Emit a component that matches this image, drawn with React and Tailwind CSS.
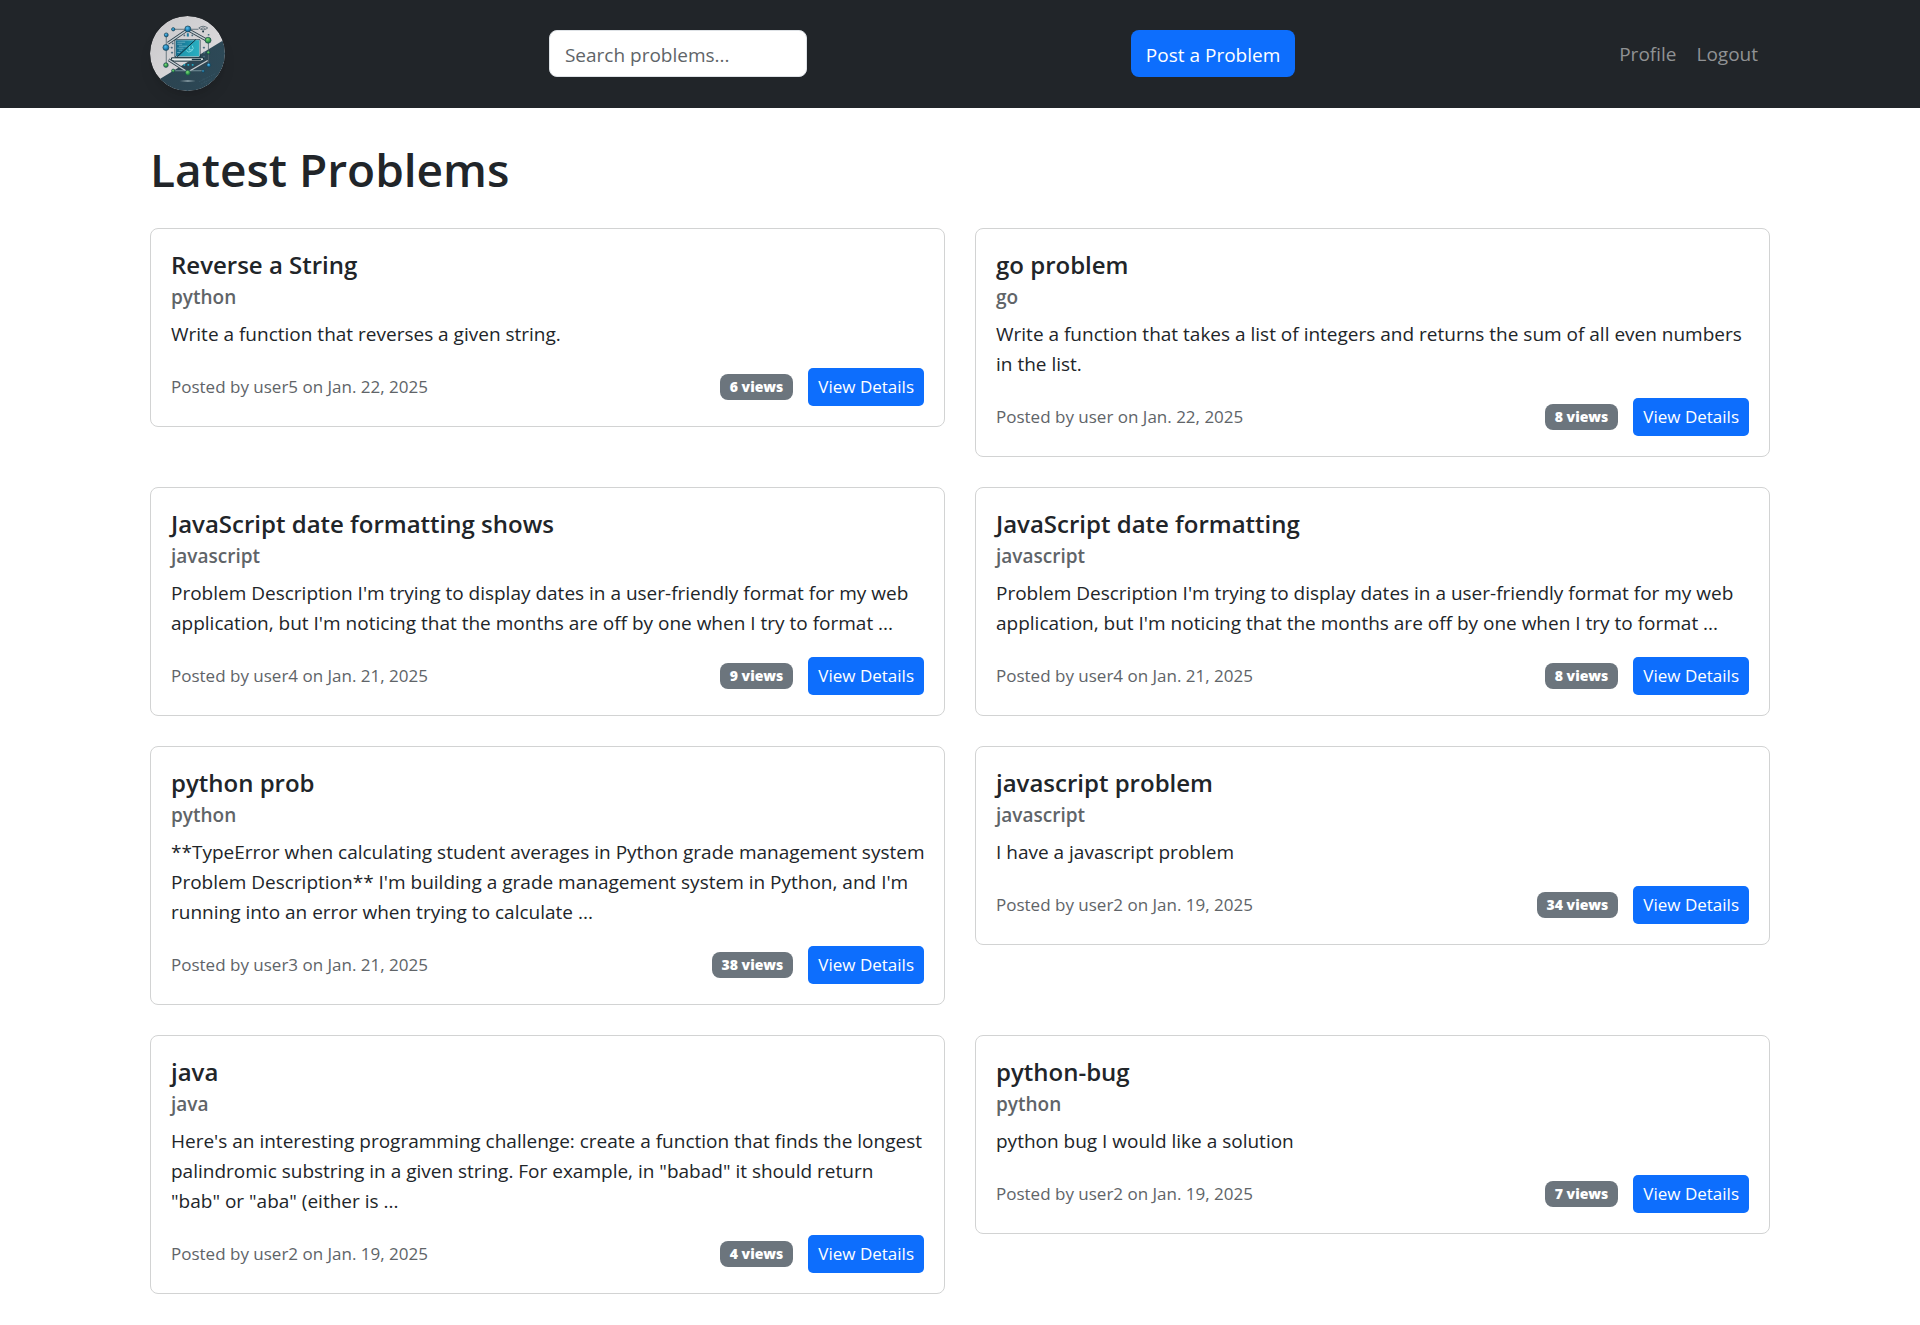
const problems = [
  { title: 'Reverse a String', language: 'python', text: 'Write a function that reverses a given string.', user: 'user5', date: 'Jan. 22, 2025', views: 6 },
  { title: 'go problem', language: 'go', text: 'Write a function that takes a list of integers and returns the sum of all even numbers in the list.', user: 'user', date: 'Jan. 22, 2025', views: 8 },
  { title: 'JavaScript date formatting shows', language: 'javascript', text: "Problem Description I'm trying to display dates in a user-friendly format for my web application, but I'm noticing that the months are off by one when I try to format ...", user: 'user4', date: 'Jan. 21, 2025', views: 9 },
  { title: 'JavaScript date formatting', language: 'javascript', text: "Problem Description I'm trying to display dates in a user-friendly format for my web application, but I'm noticing that the months are off by one when I try to format ...", user: 'user4', date: 'Jan. 21, 2025', views: 8 },
  { title: 'python prob', language: 'python', text: "**TypeError when calculating student averages in Python grade management system Problem Description** I'm building a grade management system in Python, and I'm running into an error when trying to calculate ...", user: 'user3', date: 'Jan. 21, 2025', views: 38 },
  { title: 'javascript problem', language: 'javascript', text: 'I have a javascript problem', user: 'user2', date: 'Jan. 19, 2025', views: 34 },
  { title: 'java', language: 'java', text: 'Here\'s an interesting programming challenge: create a function that finds the longest palindromic substring in a given string. For example, in "babad" it should return "bab" or "aba" (either is ...', user: 'user2', date: 'Jan. 19, 2025', views: 4 },
  { title: 'python-bug', language: 'python', text: 'python bug I would like a solution', user: 'user2', date: 'Jan. 19, 2025', views: 7 },
];

const nodes = [
  [144, 87, 9, 'b'], [100, 88, 5, 'b'], [79, 105, 6, 'b'], [78, 143, 9, 'b'], [207, 196, 6, 'b'], [190, 214, 4, 'b'],
  [205, 121, 9, 'g'], [206, 158, 5, 'g'], [78, 196, 7, 'g'], [100, 213, 5, 'g'], [144, 219, 8, 'g'],
];

const dots = [
  [133, 106], [157, 106], [98, 130], [95, 143], [96, 158], [192, 143], [193, 158], [192, 170], [206, 104],
  [133, 195], [145, 195], [158, 195],
];

function Logo() {
  return (
    <svg viewBox="30 48 226 226" className="size-[75px] rounded-full shadow-lg" role="img" aria-label="Home">
      <defs>
        <clipPath id="disc"><circle cx="143" cy="161" r="113" /></clipPath>
        <linearGradient id="light" x1="0" y1="0" x2="1" y2="1">
          <stop offset="0" stopColor="#c9c8ca" /><stop offset="1" stopColor="#e2e0e3" />
        </linearGradient>
        <linearGradient id="dark" x1="0" y1="0" x2="1" y2="0">
          <stop offset="0" stopColor="#2b4350" /><stop offset="1" stopColor="#2d4957" />
        </linearGradient>
        <linearGradient id="screen" x1="0" y1="0" x2="1" y2="0">
          <stop offset="0" stopColor="#14698a" /><stop offset="1" stopColor="#25a9bd" />
        </linearGradient>
        <radialGradient id="b" cx=".4" cy=".35"><stop offset="0" stopColor="#58bff0" /><stop offset="1" stopColor="#1672a5" /></radialGradient>
        <radialGradient id="g" cx=".4" cy=".35"><stop offset="0" stopColor="#7bdd76" /><stop offset="1" stopColor="#288b46" /></radialGradient>
      </defs>
      <g clipPath="url(#disc)">
        <rect x="30" y="48" width="226" height="226" fill="url(#light)" />
        <path d="M30 256 L256 118 V274 H30Z" fill="url(#dark)" />
        <g fill="none" stroke="#33434e" strokeWidth="9">
          <path d="M84 130 L144 89 L205 123" />
          <path d="M86 180 L144 217 L204 182" />
        </g>
        <g fill="none" stroke="#c4ced2" strokeWidth="4">
          <path d="M84 130 L144 89 L205 123" />
          <path d="M86 180 L144 217 L204 182" />
        </g>
        <g fill="none" stroke="#55666f" strokeWidth="2.5">
          <path d="M144 88 H100 M79 105 V196" />
          <path d="M144 88 H176 M206 121 V196" />
          <path d="M100 213 H190" stroke="#82a0a8" />
          <path d="M177 84 Q190 74 204 84 Q190 96 177 84 M184 86 Q190 81 197 86" />
        </g>
        <circle cx="190" cy="95" r="3" fill="#203b48" />
        {dots.map(([x, y], i) => <rect key={i} x={x - 2} y={y - 2} width="5" height="5" rx="1" fill={i > 8 ? '#22a8c2' : '#4b6d7e'} />)}
        <rect x="141" y="100" width="6" height="10" fill="#247d9f" />
        <rect x="104" y="117" width="78" height="57" rx="5" fill="#102b38" />
        <rect x="107" y="120" width="72" height="50" rx="2" fill="url(#screen)" stroke="#d4dfe1" strokeWidth="2" />
        <path d="M166 121 L178 121 V169 H116Z" fill="#2bb4c5" opacity=".55" />
        <path d="M112 127 H136 M112 133 H127 M117 139 H142 M112 145 H131 M117 151 H127 M112 158 H121" stroke="#9bd1dc" strokeWidth="2" opacity=".85" />
        <path d="M157 137 A11 11 0 1 1 139 152 M148 138 V150 H157" fill="none" stroke="#8be0e6" strokeWidth="2.5" />
        <path d="M168 119 L112 171" stroke="#12303c" strokeWidth="3" />
        <path d="M95 174 H191 V179 Q188 184 182 184 H104 Q97 184 95 179Z" fill="#e9efee" stroke="#112a35" strokeWidth="3" />
        <path d="M156 179 H184" stroke="#163643" strokeWidth="4" />
        {nodes.map(([x, y, r, c], i) => <circle key={i} cx={x} cy={y} r={r} fill={c === 'b' ? 'url(#b)' : 'url(#g)'} stroke="#1c4250" strokeWidth="2" />)}
        <path d="M120 244 Q144 241 168 244 Q144 247 120 244Z" fill="#c9d9dd" />
        <path d="M178 246 L226 222 M184 253 L216 237 M190 236 L204 260" stroke="#3e6070" strokeWidth="1.5" strokeDasharray="5 3" />
      </g>
    </svg>
  );
}

function Card({ problem }) {
  return (
    <article className="rounded-[8px] border border-[#d2d3d3] bg-white px-5 pt-[21px] pb-5">
      <h2 className="text-2xl leading-[30px] font-semibold">{problem.title}</h2>
      <h3 className="mt-[5px] mb-2.5 text-[19px] leading-6 font-semibold text-[#606468]">{problem.language}</h3>
      <p className="-mr-0.5 mb-[19px] text-[19px] leading-[30px]">{problem.text}</p>
      <div className="flex items-center justify-between">
        <small className="text-[17px] leading-[26px] text-[#606468]">Posted by {problem.user} on {problem.date}</small>
        <div className="flex items-center gap-[15px]">
          <span className="rounded-[8px] bg-[#6c757d] px-2.5 text-sm leading-[26px] font-extrabold text-white">{problem.views} views</span>
          <a href="#" className="rounded-[5px] bg-[#0d6efd] px-2.5 text-[17px] leading-[38px] text-white">View Details</a>
        </div>
      </div>
    </article>
  );
}

export default function App() {
  return (
    <div className="min-h-screen bg-white pb-7 font-['Open_Sans',sans-serif] text-[#212529]">
      <nav className="border-b border-[#212529] bg-[#212529]">
        <div className="mx-auto flex max-w-[1650px] items-center justify-between px-[15px] py-4">
          <a href="#"><Logo /></a>
          <input
            type="search"
            aria-label="Search problems"
            placeholder="Search problems..."
            className="h-[47px] w-[258px] rounded-[8px] border border-[#dee2e6] bg-white px-[15px] pt-0.5 text-[19px] placeholder:text-[#606468]"
          />
          <a href="#" className="rounded-[8px] bg-[#0d6efd] px-[15px] pt-[3px] text-[19px] leading-[44px] text-white">Post a Problem</a>
          <div className="flex items-center gap-5 pr-3 text-[19px] leading-[30px] text-[#909294]">
            <a href="#">Profile</a>
            <button type="button">Logout</button>
          </div>
        </div>
      </nav>
      <main className="mx-auto max-w-[1650px] px-[15px] pt-8">
        <h1 className="mb-[30px] text-[46px] leading-[58px] font-semibold">Latest Problems</h1>
        <div className="grid grid-cols-2 items-start gap-[30px]">
          {problems.map((p) => <Card key={p.title} problem={p} />)}
        </div>
      </main>
    </div>
  );
}
